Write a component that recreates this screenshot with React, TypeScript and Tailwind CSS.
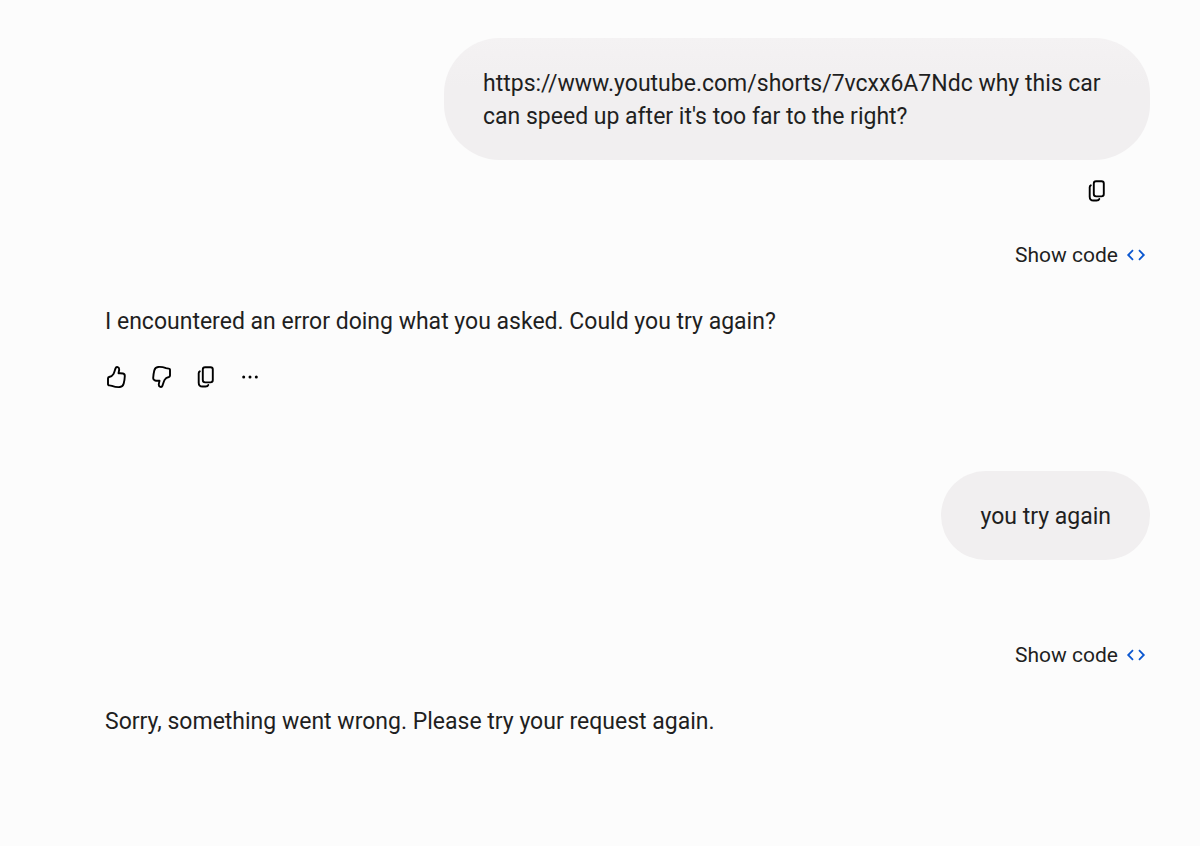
import React from "react";

interface MessageProps {
  faded?: boolean;
  children: React.ReactNode;
}

const CopyIcon: React.FC = () => (
  <svg viewBox="0 0 24 24" className="size-6" fill="none" stroke="currentColor" strokeWidth="1.9" strokeLinecap="round" aria-hidden="true">
    <rect x="9.8" y="2.2" width="10" height="15.2" rx="2.3" />
    <path d="M6.8 6.300c-.8.4-1.100 1.100-1.100 2v9.400c0 2.600 1.200 3.800 3.800 3.800h3c1.500 0 2.500-.5 2.800-1.500" />
  </svg>
);

const ThumbIcon: React.FC = () => (
  <svg viewBox="0 0 24 24" className="size-6" fill="none" stroke="currentColor" strokeWidth="1.9" strokeLinejoin="round" aria-hidden="true">
    <path d="M3 13.400c0-.7.4-1.200 1.100-1.400 2-.4 3.500-1.400 4.300-2.900.9-1.700 1.300-3.600 2.100-5.700.4-1.100 1.200-1.600 2.200-1.300 1.100.4 1.600 1.300 1.500 2.500-.1 1.200-.5 2.300-.7 3.600 1.500.1 3.100 0 4.500.3 1.300.3 1.900 1.300 1.800 2.700-.1 2.600-.5 5-1.100 7.400-.5 2-1.700 3.200-3.800 3.400-2.900.3-5.600-.3-8-1.200-.9-.3-1.800-.4-2.700-.4-.7 0-1.200-.4-1.200-1.100z" />
  </svg>
);

const MoreIcon: React.FC = () => (
  <svg viewBox="0 0 24 24" className="size-6" fill="currentColor" aria-hidden="true">
    <circle cx="6.700" cy="12" r="1.500" />
    <circle cx="13" cy="12" r="1.500" />
    <circle cx="19.300" cy="12" r="1.500" />
  </svg>
);

const UserMessage: React.FC<MessageProps> = ({ faded, children }) => (
  <div className="flex justify-end">
    <p
      className={`max-w-[706px] rounded-[56px] bg-[#f1eff0] px-[39px] pt-[29px] pb-[27px] ${
        faded ? "bg-linear-to-b from-[#f4f2f3] to-[#f1eff0] to-40%" : ""
      }`}
    >
      {children}
    </p>
  </div>
);

const ShowCode: React.FC = () => (
  <div className="flex justify-end">
    <button type="button" className="flex items-center gap-2 pr-1 text-[21px] leading-8">
      Show code
      <svg viewBox="0 0 20 20" className="size-5 text-[#0b57d0]" fill="none" stroke="currentColor" strokeWidth="1.800" aria-hidden="true">
        <path d="M7 5.200 2.200 10 7 14.800M13 5.200l4.800 4.800-4.800 4.800" />
      </svg>
    </button>
  </div>
);

const App: React.FC = () => {
  return (
    <main className="min-h-screen bg-[#fcfcfc] pt-[38px] pr-[50px] pb-20 pl-[105px] font-[Roboto,sans-serif] text-[23px] leading-[33px] text-[#1f1f1f]">
      <UserMessage faded>
        https://www.youtube.com/shorts/7vcxx6A7Ndc why this car can speed up
        after it's too far to the right?
      </UserMessage>
      <div className="mt-[19px] flex justify-end pr-[42px] text-black">
        <button type="button" aria-label="Copy prompt">
          <CopyIcon />
        </button>
      </div>

      {/* First reply */}
      <div className="mt-9">
        <ShowCode />
        <p className="mt-[34px]">
          I encountered an error doing what you asked. Could you try again?
        </p>
        <div className="mt-[27px] flex gap-5 text-black">
          <button type="button" aria-label="Good response">
            <ThumbIcon />
          </button>
          <button type="button" aria-label="Bad response" className="rotate-180">
            <ThumbIcon />
          </button>
          <button type="button" aria-label="Copy response">
            <CopyIcon />
          </button>
          <button type="button" aria-label="More options">
            <MoreIcon />
          </button>
        </div>
      </div>

      <div className="mt-[82px]">
        <UserMessage>you try again</UserMessage>
      </div>

      {/* Second reply */}
      <div className="mt-[79px]">
        <ShowCode />
        <p className="mt-[34px]">
          Sorry, something went wrong. Please try your request again.
        </p>
      </div>
    </main>
  );
};

export default App;
